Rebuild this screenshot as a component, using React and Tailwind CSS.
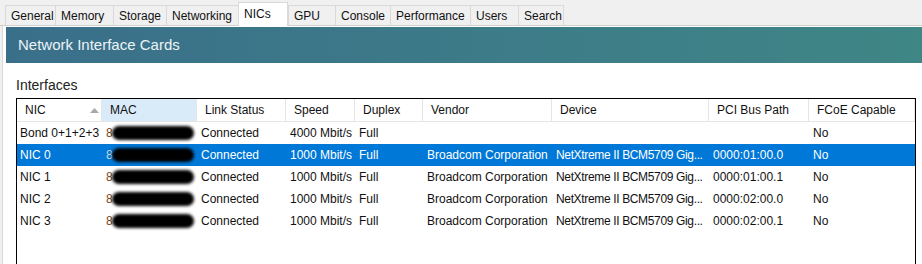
import React from 'react';

const tabs = ['General', 'Memory', 'Storage', 'Networking', 'NICs', 'GPU', 'Console', 'Performance', 'Users', 'Search'];
const tabWidths = [50, 58, 53, 72, 50, 47, 55, 80, 48, 46];

const columns = ['NIC', 'MAC', 'Link Status', 'Speed', 'Duplex', 'Vendor', 'Device', 'PCI Bus Path', 'FCoE Capable'];

const rows = [
  { nic: 'Bond 0+1+2+3', speed: '4000 Mbit/s', vendor: '', device: '', pci: '' },
  { nic: 'NIC 0', speed: '1000 Mbit/s', vendor: 'Broadcom Corporation', device: 'NetXtreme II BCM5709 Gig...', pci: '0000:01:00.0', selected: true },
  { nic: 'NIC 1', speed: '1000 Mbit/s', vendor: 'Broadcom Corporation', device: 'NetXtreme II BCM5709 Gig...', pci: '0000:01:00.1' },
  { nic: 'NIC 2', speed: '1000 Mbit/s', vendor: 'Broadcom Corporation', device: 'NetXtreme II BCM5709 Gig...', pci: '0000:02:00.0' },
  { nic: 'NIC 3', speed: '1000 Mbit/s', vendor: 'Broadcom Corporation', device: 'NetXtreme II BCM5709 Gig...', pci: '0000:02:00.1' },
];

const grid = 'grid grid-cols-[85px_95px_89px_69px_68px_129px_157px_100px_106px]';

function MacBlob({ selected }) {
  // the MAC addresses are scribbled out in the screenshot
  return (
    <div className="relative flex items-center pl-[4px] h-full">
      <span className={selected ? 'text-[#c8d8e8]' : 'text-[#7a4a1a]'}>8</span>
      <div className="absolute left-[10px] top-[4px] w-[82px] h-[14px] rounded-full bg-black blur-[1.5px]" />
    </div>
  );
}

export default function App() {
  return (
    <div className="w-[922px] h-[264px] overflow-hidden bg-[#f0f0f0] text-[12px] text-[#111]" style={{ fontFamily: '"Liberation Sans", Arial, sans-serif' }}>
      {/* tab strip */}
      <div className="flex items-end h-[26px] pl-[5px] border-b border-[#cfcfcf]">
        {tabs.map((t, i) =>
          t === 'NICs' ? (
            <div key={t} style={{ width: tabWidths[i] }} className="h-[24px] -mb-px bg-white border border-b-0 border-[#d9d9d9] flex items-start pt-[2px] px-[5px] relative z-10">
              {t}
            </div>
          ) : (
            <div key={t} style={{ width: tabWidths[i] }} className="h-[20px] bg-[#f0f0f0] border border-b-0 border-r-0 last:border-r border-[#d9d9d9] flex items-center px-[5px]">
              {t}
            </div>
          )
        )}
      </div>

      {/* panel */}
      <div className="ml-[2px] border-l border-[#d9d9d9] bg-white h-[238px] pl-[3px] pt-px">
        <div className="h-[36px] bg-gradient-to-r from-[#3a6f8a] to-[#3f8686] flex items-center pl-[12px] text-[15px] text-[#eef3f6]">
          Network Interface Cards
        </div>
        <div className="pl-[10px] pt-[12px] text-[14px] text-[#222] leading-[20px]">Interfaces</div>
        <div className="ml-[10px] mt-[3px] w-[900px] h-[200px] border border-black bg-white">
          <div className={`${grid} h-[23px] border-b border-[#e5e5e5]`}>
            {columns.map((c, i) => (
              <div key={c} className={`relative flex items-center pl-[8px] border-r border-[#e5e5e5] ${i === 1 ? 'bg-[#d9ebf9]' : ''}`}>
                {c}
                {i === 0 && (
                  <svg className="absolute left-[73px] top-[9px]" width="9" height="5" viewBox="0 0 9 5">
                    <path d="M0 5 L4.5 0 L9 5 Z" fill="#a8a8a8" />
                  </svg>
                )}
              </div>
            ))}
          </div>
          {rows.map((r) => (
            <div key={r.nic} className={`${grid} h-[22px] ${r.selected ? 'bg-[#0078d7] text-white' : ''}`}>
              <div className="flex items-center pl-[3px] whitespace-nowrap">{r.nic}</div>
              <MacBlob selected={r.selected} />
              <div className="flex items-center pl-[4px]">Connected</div>
              <div className="flex items-center pl-[4px] whitespace-nowrap">{r.speed}</div>
              <div className="flex items-center pl-[4px]">Full</div>
              <div className="flex items-center pl-[4px] whitespace-nowrap">{r.vendor}</div>
              <div className="flex items-center pl-[4px] whitespace-nowrap tracking-[-0.35px]">{r.device}</div>
              <div className="flex items-center pl-[4px]">{r.pci}</div>
              <div className="flex items-center pl-[4px]">No</div>
            </div>
          ))}
        </div>
      </div>
    </div>
  );
}
